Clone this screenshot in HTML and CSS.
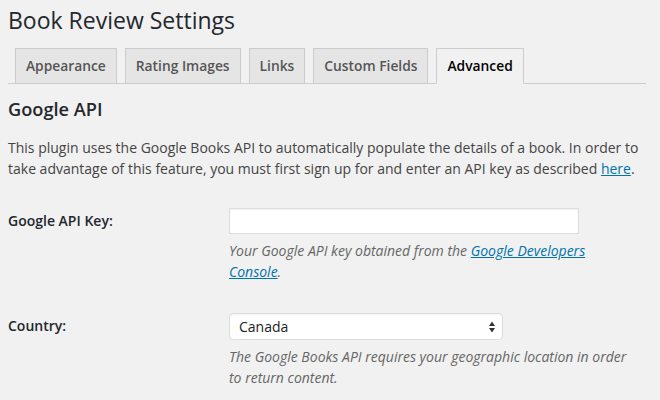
FILE: index.html
```html
<!DOCTYPE html>
<html>
<head>
<meta charset="utf-8">
<link rel="stylesheet" href="styles.css">
</head>
<body>
<div class="wrap">
  <h1 class="title">Book Review Settings</h1>
  <nav class="tabs">
    <a class="tab">Appearance</a>
    <a class="tab">Rating Images</a>
    <a class="tab">Links</a>
    <a class="tab">Custom Fields</a>
    <a class="tab active">Advanced</a>
  </nav>
  <h2 class="section">Google API</h2>
  <p class="intro">This plugin uses the Google Books API to automatically populate the details of a book. In order to take advantage of this feature, you must first sign up for and enter an API key as described <a class="link" href="#">here</a>.</p>
  <div class="form">
    <div class="row row-key">
      <label class="label">Google API Key:</label>
      <div class="field">
        <input class="text-input" type="text">
        <p class="desc">Your Google API key obtained from the <a class="link" href="#">Google Developers Console</a>.</p>
      </div>
    </div>
    <div class="row row-country">
      <label class="label">Country:</label>
      <div class="field">
        <div class="select">
          <span>Canada</span>
          <svg class="arrows" width="6" height="12" viewBox="0 0 6 12"><path d="M3 0.5 L6 5 H0 Z M3 11.5 L6 7 H0 Z" fill="#333"/></svg>
        </div>
        <p class="desc">The Google Books API requires your geographic location in order to return content.</p>
      </div>
    </div>
  </div>
</div>
</body>
</html>
```
FILE: styles.css
```css
html, body {
  margin: 0;
  padding: 0;
  background: #f1f1f1;
}
body {
  font-family: "Open Sans", "Liberation Sans", sans-serif;
  color: #444;
  font-size: 14px;
}
.wrap {
  padding: 0 14px 0 8px;
}
.title {
  margin: 0;
  padding-top: 5px;
  font-size: 23px;
  line-height: 30px;
  font-weight: 400;
  color: #23282d;
}
.tabs {
  display: flex;
  align-items: flex-end;
  gap: 8px;
  margin-top: 13px;
  padding-left: 7px;
  border-bottom: 1px solid #ccc;
  height: 35px;
}
.tab {
  display: block;
  padding: 5px 10px;
  font-size: 13.8px;
  line-height: 24px;
  font-weight: 600;
  color: #555;
  background: #e5e5e5;
  border: 1px solid #ccc;
  border-bottom: none;
}
.tab.active {
  background: #f1f1f1;
  color: #000;
  border-bottom: 1px solid #f1f1f1;
  margin-bottom: -1px;
}
.section {
  margin: 13px 0 0;
  font-size: 18.2px;
  line-height: 24px;
  font-weight: 600;
  color: #23282d;
}
.intro {
  margin: 16px -6px 0 0;
  font-size: 14px;
  line-height: 21px;
}
.link {
  color: #0073aa;
  text-decoration: underline;
}
.row {
  display: grid;
  grid-template-columns: 221px 1fr;
}
.row-key {
  padding-top: 29px;
}
.row-country {
  padding-top: 31px;
}
.label {
  font-size: 14px;
  font-weight: 600;
  color: #23282d;
  line-height: 26px;
}
.text-input {
  display: block;
  box-sizing: border-box;
  width: 350px;
  height: 26px;
  margin: 0;
  border: 1px solid #ddd;
  background: #fff;
  box-shadow: inset 0 1px 2px rgba(0,0,0,0.07);
  outline: none;
}
.select {
  box-sizing: border-box;
  width: 274px;
  height: 27px;
  border: 1px solid #ddd;
  border-radius: 4px;
  background: #fff;
  display: flex;
  align-items: center;
  justify-content: space-between;
  padding: 0 7px 0 9px;
  font-size: 14px;
  color: #222;
  box-shadow: inset 0 1px 2px rgba(0,0,0,0.05);
}
.arrows {
  display: block;
}
.desc {
  margin: 6px 0 0;
  font-size: 14px;
  line-height: 21px;
  font-style: italic;
  color: #666;
  max-width: 400px;
}
```
